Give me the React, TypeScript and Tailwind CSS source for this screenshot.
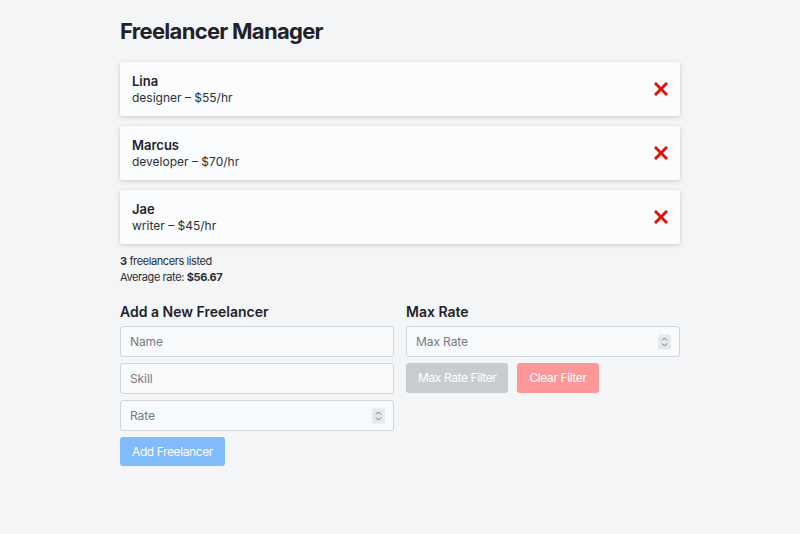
import React from "react";

interface Freelancer {
  name: string;
  skill: string;
  rate: number;
}

const freelancers: Freelancer[] = [
  { name: "Lina", skill: "designer", rate: 55 },
  { name: "Marcus", skill: "developer", rate: 70 },
  { name: "Jae", skill: "writer", rate: 45 },
];

const Spinner: React.FC = () => (
  <span className="absolute right-[9px] top-1/2 -translate-y-1/2 w-[13px] h-[15px] rounded-[2px] bg-[#e6e7ea] flex items-center justify-center">
    <svg width="7" height="11" viewBox="0 0 7 11" fill="none" stroke="#6b7280" strokeWidth="1">
      <path d="M1 4l2.5-2.5L6 4" />
      <path d="M1 7l2.5 2.5L6 7" />
    </svg>
  </span>
);

const Field: React.FC<{ placeholder: string; number?: boolean }> = ({ placeholder, number }) => (
  <div className="relative">
    <input
      type="text"
      placeholder={placeholder}
      className="w-full h-[31px] px-[9px] text-[12px] tracking-[-0.1px] bg-[#f9fafb] border border-[#d1d5db] rounded-[3px] placeholder:text-[#737a85] outline-none"
    />
    {number && <Spinner />}
  </div>
);

export default function App() {
  const avg = freelancers.reduce((s, f) => s + f.rate, 0) / freelancers.length;

  return (
    <div className="min-h-[534px] bg-[#f4f5f7] font-['Inter',sans-serif] text-[#1f2329]">
      <div className="w-[560px] mx-auto pt-[18px]">
        <h1 className="text-[22px] font-bold leading-[26px] tracking-[-0.7px]">Freelancer Manager</h1>

        <div className="mt-[18px] flex flex-col gap-[10px]">
          {freelancers.map((f) => (
            <div
              key={f.name}
              className="h-[54px] flex items-center justify-between px-3 bg-[#fbfcfd] rounded-[3px] shadow-[0_1px_4px_rgba(0,0,0,0.18)]"
            >
              <div>
                <div className="text-[13px] font-semibold leading-[16px]">{f.name}</div>
                <div className="text-[12px] leading-[16px] mt-[1px] text-[#2b2f36]">
                  {f.skill} – ${f.rate}/hr
                </div>
              </div>
              <svg width="14" height="14" viewBox="0 0 14 14">
                <path d="M2 2l10 10M12 2L2 12" stroke="#e0140f" strokeWidth="3" strokeLinecap="square" />
              </svg>
            </div>
          ))}
        </div>

        <div className="mt-[9px] text-[11px] leading-[16px] tracking-[-0.4px] text-[#2b2f36]">
          <div>
            <span className="font-bold">3</span> freelancers listed
          </div>
          <div>
            Average rate: <span className="font-bold">${avg.toFixed(2)}</span>
          </div>
        </div>

        <div className="mt-[18px] grid grid-cols-2 gap-3">
          <div>
            <h2 className="text-[14px] font-semibold leading-[18px] mb-[5px]">Add a New Freelancer</h2>
            <div className="flex flex-col gap-[6px]">
              <Field placeholder="Name" />
              <Field placeholder="Skill" />
              <Field placeholder="Rate" number />
            </div>
            <button className="mt-[6px] h-[29px] px-3 text-[12px] tracking-[-0.4px] text-white bg-[#80bbfb] rounded-[3px]">
              Add Freelancer
            </button>
          </div>
          <div>
            <h2 className="text-[14px] font-semibold leading-[18px] mb-[5px]">Max Rate</h2>
            <Field placeholder="Max Rate" number />
            <div className="mt-[6px] flex gap-[9px]">
              <button className="h-[30px] px-3 text-[12px] tracking-[-0.4px] text-white bg-[#c8cbd0] rounded-[3px]">
                Max Rate Filter
              </button>
              <button className="h-[30px] px-3 text-[12px] tracking-[-0.4px] text-white bg-[#fd9898] rounded-[3px]">
                Clear Filter
              </button>
            </div>
          </div>
        </div>
      </div>
    </div>
  );
}
